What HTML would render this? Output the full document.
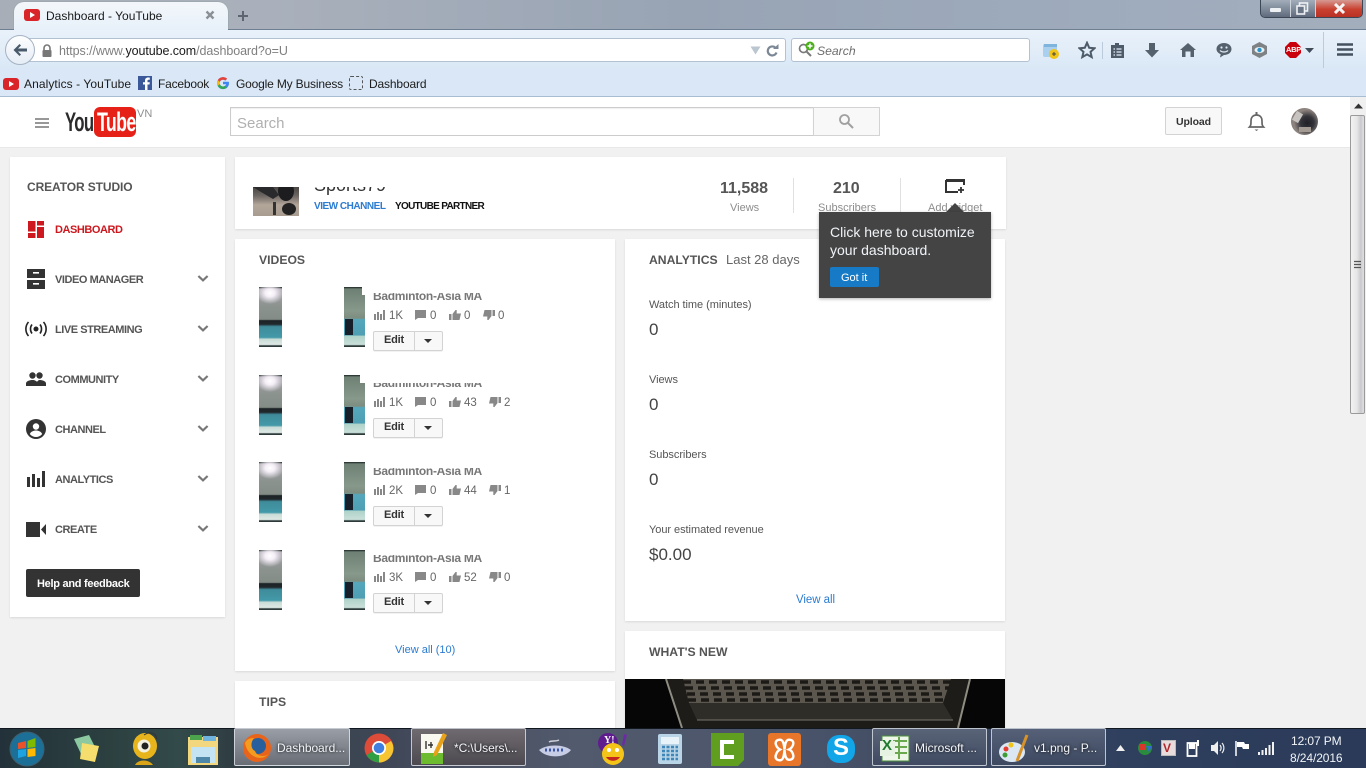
<!DOCTYPE html>
<html><head><meta charset="utf-8"><title>Dashboard - YouTube</title>
<style>
html,body{margin:0;padding:0;width:1366px;height:768px;overflow:hidden;background:#f1f1f1;font-family:"Liberation Sans",sans-serif;color:#333}
div,span,svg{position:absolute}
.t{white-space:nowrap;line-height:1}
.card{background:#fff;box-shadow:0 1px 2px rgba(0,0,0,.1)}
.nav{left:55px;font-size:11px;font-weight:bold;color:#555;letter-spacing:-.45px}
.chev{left:197px;width:12px;height:8px}
.st{font-size:11.5px;color:#666}
.lab{left:649px;font-size:11px;color:#555;letter-spacing:-.05px}
.val{left:649px;font-size:17px;color:#444}
.bm{font-size:12px;color:#1c1c1c;letter-spacing:-.08px}
.tb{font-size:12px;color:#f2f5f8;text-shadow:0 0 3px #000}
.hd{font-size:12.2px;font-weight:bold;color:#555}
.btn{top:728px;height:38px;border:1px solid rgba(230,235,240,.75);border-radius:2px;box-sizing:border-box}
.thumb{width:23px;height:60px;background:radial-gradient(ellipse 14px 11px at 11px 6px,#fff 0,#f4eef6 35%,rgba(200,190,205,0) 100%),linear-gradient(180deg,#2f3a38 0,#2f3a38 1.5%,#a9a3ae 3%,#8d9490 30%,#838c86 54%,#1c2326 56%,#20282b 62%,#3f8c9b 66%,#4399a8 84%,#c8dcd6 87%,#dfe9e5 96%,#2d3a3a 98%)}
.thumb2{width:21px;height:60px;background:linear-gradient(#17202a,#17202a) 1px 32px/8px 16px no-repeat,linear-gradient(180deg,#2f3a38 0,#2f3a38 1.5%,#6d8073 3%,#87998b 40%,#7d8d80 52%,#55a7bb 54%,#4e9fb4 80%,#b0d3ca 82%,#c9e0d9 96%,#2d3a3a 98%)}
.edit{left:373px;width:70px;height:20px;box-sizing:border-box;border:1px solid #d3d3d3;border-radius:2px;background:#f8f8f8;box-shadow:0 1px 0 rgba(0,0,0,.05)}
.edit i{position:absolute;left:40px;top:0;width:1px;height:18px;background:#d3d3d3}
.edit b{position:absolute;left:0;top:0;width:40px;text-align:center;font:bold 11px/16px "Liberation Sans",sans-serif;color:#333;letter-spacing:-.2px}
.edit u{position:absolute;left:50px;top:7px;border:4px solid transparent;border-top:4px solid #333;border-bottom:0}
.title{left:373px;width:180px;height:10px;overflow:hidden}
.title span{left:0;top:-4px;font-size:12px;font-weight:bold;color:#777;white-space:nowrap;line-height:14px;letter-spacing:-.3px}
</style></head><body>
<svg width="0" height="0" style="left:0;top:0"><defs>
<symbol id="bars" viewBox="0 0 12 10"><path d="M0 4h2v6H0zM3 2h2v8H3zM6 4h2v6H6zM9 0h2v10H9z"/></symbol>
<symbol id="cmt" viewBox="0 0 11 10"><path d="M0 0h11v8H3L0 10z"/></symbol>
<symbol id="up" viewBox="0 0 12 10"><path d="M0 4h2.500v6H0zM3.500 4 6.500 0h1.200v3.500H12L10.500 10H3.500z"/></symbol>
<symbol id="dn" viewBox="0 0 12 10"><path d="M9.500 0H12v6H9.500zM8.500 6l-3 4H4.300V6.500H0L1.500 0h7z"/></symbol>
<symbol id="chev" viewBox="0 0 12 8"><path d="M1.400 1 6 5.400 10.600 1" fill="none" stroke="#777" stroke-width="2.200"/></symbol>
<symbol id="yt" viewBox="0 0 16 12"><rect width="16" height="12" rx="3" fill="#d9252a"/><path d="M6 3l5 3-5 3z" fill="#fff"/></symbol>
</defs></svg>

<!-- title bar -->
<div style="left:0;top:0;width:1366px;height:30px;background:linear-gradient(90deg,#a8aeb8 0,#a9b0bb 20%,#98a4b4 50%,#9eabbd 80%,#a3aebc 100%)"></div>
<div style="left:0;top:29px;width:1366px;height:1px;background:#6e7f92"></div>
<div style="left:14px;top:2px;width:214px;height:28px;background:linear-gradient(180deg,#f3f7fb,#e7f0f9);border-radius:10px 10px 0 0;box-shadow:0 0 1px #687"></div>
<svg style="left:24px;top:9px" width="16" height="12"><use href="#yt"/></svg>
<div class="t" style="left:46px;top:10px;font-size:12px;color:#1a1a1a">Dashboard - YouTube</div>
<svg style="left:205px;top:10px" width="10" height="10"><path d="M1.500 1.500 8.500 8.500M8.500 1.500 1.500 8.500" stroke="#8b8f96" stroke-width="2.400"/></svg>
<svg style="left:237px;top:10px" width="12" height="12"><path d="M6 1v10M1 6h10" stroke="#5c6570" stroke-width="2"/></svg>
<!-- window buttons -->
<div style="left:1260px;top:0;width:103px;height:18px;border:1px solid #3c4654;border-top:0;border-radius:0 0 5px 5px;box-sizing:border-box;overflow:hidden;background:#73808f">
 <div style="left:0;top:0;width:29px;height:17px;background:linear-gradient(180deg,#a3adba,#5f6b7d)"></div>
 <div style="left:29px;top:0;width:26px;height:17px;background:linear-gradient(180deg,#a3adba,#5f6b7d);border-left:1px solid #cdd3da;border-right:1px solid #cdd3da;box-sizing:border-box"></div>
 <div style="left:55px;top:0;width:47px;height:17px;background:linear-gradient(180deg,#d69a92 0,#c9402f 55%,#b83224 100%)"></div>
 <div style="left:9px;top:8px;width:11px;height:4px;background:#eef1f4;border-radius:1px"></div>
 <svg style="left:35px;top:2px" width="13" height="13"><rect x="3.500" y="1" width="8" height="8" fill="none" stroke="#eef1f4" stroke-width="1.600"/><rect x="1" y="4" width="7.500" height="8" fill="#6a7585" stroke="#eef1f4" stroke-width="1.600"/></svg>
 <svg style="left:72px;top:3px" width="13" height="11"><path d="M2 1 11 10M11 1 2 10" stroke="#f4f4f4" stroke-width="3"/></svg>
</div>

<!-- nav bar -->
<div style="left:0;top:30px;width:1366px;height:66px;background:linear-gradient(180deg,#e9f1fa 0,#e2edf8 30%,#d9e7f6 60%,#d9e7f6 100%)"></div>
<div style="left:0;top:96px;width:1366px;height:1px;background:#a9bdd2"></div>
<div style="left:20px;top:38px;width:766px;height:24px;background:#fff;border:1px solid #b3c2d3;border-left:0;border-radius:0 3px 3px 0;box-sizing:border-box"></div>
<div style="left:5px;top:35px;width:30px;height:30px;border-radius:50%;background:linear-gradient(180deg,#fdfeff,#e6edf5);border:1px solid #a4b2c2;box-sizing:border-box"></div>
<svg style="left:12px;top:43px" width="16" height="14"><path d="M7.500 1 1.500 7l6 6 1.500-1.500L6 8.500h9v-3H6l3-3z" fill="#4a5a6b"/></svg>
<svg style="left:41px;top:44px" width="12" height="13"><path d="M3 6V4a3 3 0 0 1 6 0v2" fill="none" stroke="#777" stroke-width="1.600"/><rect x="1.500" y="6" width="9" height="7" rx="1" fill="#777"/></svg>
<div class="t" style="left:59px;top:45px;font-size:12.500px;color:#7f7f7f;letter-spacing:-.08px">https://www.<span style="position:static;color:#1a1a1a">youtube.com</span>/dashboard?o=U</div>
<svg style="left:750px;top:46px" width="11" height="9"><path d="M.5 .5h10L5.500 8.500z" fill="#bcc6d0"/></svg>
<svg style="left:766px;top:44px" width="13" height="13"><path d="M10.500 8.500a4.500 4.500 0 1 1-1-4.700" fill="none" stroke="#7b8794" stroke-width="2.200"/><path d="M7 5h5.500V0z" fill="#7b8794"/></svg>
<div style="left:791px;top:38px;width:239px;height:24px;background:#fff;border:1px solid #b3c2d3;border-radius:3px;box-sizing:border-box"></div>
<svg style="left:797px;top:41px" width="20" height="18"><circle cx="6.500" cy="7.500" r="4" fill="none" stroke="#7a7a7a" stroke-width="1.700"/><path d="M9.500 10.500 14 15" stroke="#7a7a7a" stroke-width="2"/><circle cx="13" cy="5" r="4.500" fill="#4caf1c"/><path d="M13 2.500v5M10.500 5h5" stroke="#fff" stroke-width="1.500"/></svg>
<div class="t" style="left:817px;top:45px;font-size:12.200px;font-style:italic;color:#6d6d6d">Search</div>
<!-- toolbar icons -->
<svg style="left:1042px;top:42px" width="18" height="18"><rect x="1" y="2" width="14" height="13" rx="2" fill="#a9d0ee"/><rect x="2" y="2" width="13" height="3" fill="#7fb4dc"/><circle cx="12" cy="12" r="5" fill="#f0c419"/><path d="M10 12h4M12 10v4" stroke="#444" stroke-width="1"/></svg>
<svg style="left:1078px;top:41px" width="18" height="18"><path d="M9 1.800 11.200 6.800 16.500 7.300 12.500 10.900 13.700 16.100 9 13.400 4.300 16.100 5.500 10.900 1.500 7.300 6.800 6.800z" fill="none" stroke="#4e5b69" stroke-width="2"/></svg>
<div style="left:1102px;top:42px;width:1px;height:17px;background:#bccbdb"></div>
<svg style="left:1110px;top:42px" width="15" height="16"><path d="M1 3h4V1h4v2h5v13H1z" fill="#4e5b69"/><path d="M3.500 7h1.500M3.500 10h1.500M3.500 13h1.500M6.500 7h5M6.500 10h5M6.500 13h5" stroke="#e3edf8" stroke-width="1.300"/></svg>
<svg style="left:1144px;top:42px" width="16" height="16"><path d="M5 1h6v7h4l-7 7.500L1 8h4z" fill="#56616e"/></svg>
<svg style="left:1180px;top:43px" width="16" height="14"><path d="M8 0 16 7h-2v7h-3.500V8.500h-5V14H2V7H0z" fill="#56616e"/></svg>
<svg style="left:1216px;top:42px" width="16" height="16"><path d="M8 1c4.300 0 7.500 2.500 7.500 6S12.300 13 8 13l-4 2.500.7-3.200C2 11 .5 9.300.5 7 .5 3.500 3.700 1 8 1z" fill="#56616e"/><circle cx="5.500" cy="5.500" r="1.100" fill="#dfe9f5"/><circle cx="10.500" cy="5.500" r="1.100" fill="#dfe9f5"/><path d="M4 8.500c2 2 6 2 8 0" fill="none" stroke="#dfe9f5" stroke-width="1.200"/></svg>
<svg style="left:1252px;top:42px" width="15" height="16"><path d="M7.500 0 15 4v8l-7.500 4L0 12V4z" fill="#7e8285"/><ellipse cx="7.500" cy="8" rx="5" ry="3" fill="#e9f0f6"/><circle cx="7.500" cy="8" r="2.200" fill="#2b93c8"/></svg>
<svg style="left:1285px;top:42px" width="16" height="16"><path d="M5 0h6l5 5v6l-5 5H5l-5-5V5z" fill="#c9000b"/></svg>
<div class="t" style="left:1286px;top:46px;font-size:7.500px;font-weight:bold;color:#fff;letter-spacing:-.3px">ABP</div>
<svg style="left:1305px;top:48px" width="9" height="5"><path d="M0 0h9L4.500 5z" fill="#3e4a58"/></svg>
<div style="left:1323px;top:32px;width:1px;height:36px;background:#bccbdb"></div>
<svg style="left:1337px;top:43px" width="16" height="13"><path d="M0 1.500h16M0 6.500h16M0 11.500h16" stroke="#45515f" stroke-width="2.400"/></svg>

<!-- bookmarks -->
<svg style="left:3px;top:78px" width="16" height="12"><use href="#yt"/></svg>
<div class="t bm" style="left:24px;top:78px;letter-spacing:.08px">Analytics - YouTube</div>
<div style="left:138px;top:76px;width:14px;height:14px;background:#3b5998"></div>
<svg style="left:138px;top:76px" width="14" height="14"><path d="M9.500 14V8.500h2l.3-2.300H9.500V4.800c0-.7.200-1.100 1.100-1.100h1.200V1.600c-.2 0-.9-.1-1.800-.1C8.300 1.500 7 2.600 7 4.500v1.700H5v2.300h2V14z" fill="#fff"/></svg>
<div class="t bm" style="left:158px;top:78px;letter-spacing:-.2px">Facebook</div>
<svg style="left:216px;top:76px" width="14" height="14" viewBox="0 0 14 14"><path d="M12.500 5.800H7v2.500h3.200A3.400 3.400 0 1 1 9.300 4.600l1.800-1.800A6 6 0 1 0 13 7c0-.4 0-.8-.5-1.200z" fill="#4285f4"/><path d="M1.700 4.200 3.800 5.700A3.400 3.400 0 0 1 9.300 4.600l1.800-1.800A6 6 0 0 0 1.700 4.200z" fill="#ea4335"/><path d="M1.700 4.200a6 6 0 0 0 0 5.600l2.100-1.600a3.400 3.400 0 0 1 0-2.500z" fill="#fbbc05"/><path d="M1.700 9.800A6 6 0 0 0 11 11.500L9 9.900a3.400 3.400 0 0 1-5.200-1.700z" fill="#34a853"/></svg>
<div class="t bm" style="left:236px;top:78px;letter-spacing:-.17px">Google My Business</div>
<div style="left:349px;top:76px;width:14px;height:14px;border:1px dashed #555;box-sizing:border-box;border-radius:2px"></div>
<div class="t bm" style="left:369px;top:78px;letter-spacing:-.15px">Dashboard</div>

<!-- masthead -->
<div style="left:0;top:97px;width:1350px;height:50px;background:#fff;border-bottom:1px solid #e8e8e8"></div>
<svg style="left:35px;top:118px" width="14" height="10"><path d="M0 1h14M0 5h14M0 9h14" stroke="#8a8a8a" stroke-width="1.700"/></svg>
<div class="t" style="left:65px;top:109px;font-size:27px;font-weight:bold;color:#2b2b2b;letter-spacing:-1px;transform:scaleX(.62);transform-origin:0 0">You</div>
<div style="left:94px;top:107px;width:42px;height:30px;background:#e62117;border-radius:6px"></div>
<div class="t" style="left:97px;top:109px;font-size:27px;font-weight:bold;color:#fff;letter-spacing:-1px;transform:scaleX(.66);transform-origin:0 0">Tube</div>
<div class="t" style="left:137px;top:109px;font-size:11px;color:#8f8f8f">VN</div>
<div style="left:230px;top:107px;width:584px;height:29px;border:1px solid #ccc;box-sizing:border-box;background:#fff;box-shadow:inset 0 1px 1px #eee"></div>
<div class="t" style="left:237px;top:116px;font-size:15px;color:#b0b0b0">Search</div>
<div style="left:813px;top:107px;width:67px;height:29px;border:1px solid #d3d3d3;box-sizing:border-box;background:#f8f8f8"></div>
<svg style="left:838px;top:113px" width="17" height="17"><circle cx="6.500" cy="6.500" r="4.500" fill="none" stroke="#a0a0a0" stroke-width="1.800"/><path d="M10 10 15 15" stroke="#a0a0a0" stroke-width="2"/></svg>
<div style="left:1165px;top:107px;width:57px;height:28px;border:1px solid #d3d3d3;box-sizing:border-box;border-radius:2px;background:#f8f8f8"></div>
<div class="t" style="left:1176px;top:117px;font-size:10.500px;font-weight:bold;color:#333;letter-spacing:-.1px">Upload</div>
<svg style="left:1247px;top:110px" width="19" height="22"><path d="M2.500 17c1.500-1.500 1.500-3 1.500-6 0-3.500 2-6 5.500-6s5.500 2.500 5.500 6c0 3 0 4.500 1.500 6z" fill="none" stroke="#666" stroke-width="1.700"/><path d="M8.500 2h2v3h-2zM7.500 19.500h4l-2 1.500z" fill="#666"/></svg>
<div style="left:1291px;top:108px;width:27px;height:27px;border-radius:50%;background:radial-gradient(circle at 60% 55%,#1f1f24 0,#33333a 30%,#8f8580 60%,#77706c 100%);overflow:hidden">
 <div style="left:3px;top:4px;width:7px;height:10px;background:#c7c3c0;transform:rotate(30deg)"></div>
 <div style="left:8px;top:19px;width:12px;height:5px;background:#a39a93"></div>
</div>

<!-- scrollbar -->
<div style="left:1350px;top:97px;width:16px;height:631px;background:#f0f0f0"></div>
<svg style="left:1354px;top:103px" width="9" height="6"><path d="M0 5.500 4.500 .5 9 5.500z" fill="#333"/></svg>
<div style="left:1350px;top:115px;width:15px;height:299px;box-sizing:border-box;border:1px solid #9a9a9a;border-radius:2px;background:linear-gradient(90deg,#f2f2f2 0,#e6e6e6 45%,#cacace 75%,#e0e0e2 100%)"></div>
<svg style="left:1353px;top:260px" width="9" height="10"><path d="M1 1.500h7M1 4.500h7M1 7.500h7" stroke="#555" stroke-width="1.300"/></svg>

<!-- sidebar -->
<div class="card" style="left:10px;top:157px;width:215px;height:460px"></div>
<div class="t" style="left:27px;top:181px;font-size:12px;font-weight:bold;color:#555;letter-spacing:-.1px">CREATOR STUDIO</div>
<svg style="left:28px;top:221px" width="16" height="17"><path d="M0 0h7.500v10.500H0zM9 0h7v4.500H9zM9 6h7v11H9zM0 12h7.500v5H0z" fill="#cc181e"/></svg>
<div class="t nav" style="top:225px;color:#cc181e">DASHBOARD</div>
<svg style="left:27px;top:269px" width="18" height="20"><path d="M0 0h18v9H0zM0 11h18v9H0z" fill="#333"/><path d="M6 3h6v1.600H6zM6 14h6v1.600H6z" fill="#fff"/></svg>
<div class="t nav" style="top:275px">VIDEO MANAGER</div>
<svg class="chev" style="top:275px"><use href="#chev"/></svg>
<svg style="left:25px;top:321px" width="22" height="16"><circle cx="11" cy="8" r="2.500" fill="#222"/><path d="M7 3.500c-2 2.500-2 6.500 0 9M15 3.500c2 2.500 2 6.500 0 9M3.500 1c-3.500 4-3.500 10 0 14M18.500 1c3.500 4 3.500 10 0 14" fill="none" stroke="#222" stroke-width="1.600"/></svg>
<div class="t nav" style="top:325px">LIVE STREAMING</div>
<svg class="chev" style="top:325px"><use href="#chev"/></svg>
<svg style="left:26px;top:372px" width="20" height="14"><circle cx="6.500" cy="3.500" r="3.200" fill="#333"/><circle cx="13.500" cy="3.500" r="3.200" fill="#333"/><path d="M0 14v-2.500C0 9 4 8 6.500 8S10 9 11 9.800c1-.9 1.500-1.800 2.500-1.800 2.500 0 6.500 1 6.500 3.500V14z" fill="#333"/></svg>
<div class="t nav" style="top:375px">COMMUNITY</div>
<svg class="chev" style="top:375px"><use href="#chev"/></svg>
<svg style="left:26px;top:419px" width="20" height="20"><circle cx="10" cy="10" r="10" fill="#333"/><circle cx="10" cy="7.500" r="3.200" fill="#fff"/><path d="M3.800 15c1.200-2.500 3.700-3.500 6.200-3.500s5 1 6.200 3.500C14.500 17 12.300 18 10 18s-4.500-1-6.200-3z" fill="#fff"/></svg>
<div class="t nav" style="top:425px">CHANNEL</div>
<svg class="chev" style="top:425px"><use href="#chev"/></svg>
<svg style="left:27px;top:471px" width="18" height="16"><path d="M0 6h3v10H0zM5 3h3v13H5zM10 7h3v9h-3zM15 0h3v16h-3z" fill="#333"/></svg>
<div class="t nav" style="top:475px">ANALYTICS</div>
<svg class="chev" style="top:475px"><use href="#chev"/></svg>
<svg style="left:26px;top:522px" width="20" height="15"><path d="M0 0h14v15H0zM15 7.500 20 2v11z" fill="#333"/></svg>
<div class="t nav" style="top:525px">CREATE</div>
<svg class="chev" style="top:525px"><use href="#chev"/></svg>
<div style="left:26px;top:569px;width:114px;height:28px;background:#333;border-radius:2px"></div>
<div class="t" style="left:37px;top:579px;font-size:11px;font-weight:bold;color:#fff;letter-spacing:-.28px">Help and feedback</div>

<!-- top card -->
<div class="card" style="left:235px;top:157px;width:771px;height:72px"></div>
<div style="left:253px;top:187px;width:46px;height:29px;background:linear-gradient(180deg,#4a4644 0,#6d6662 30%,#b3a79a 62%,#a89c90 100%)"></div>
<svg style="left:253px;top:187px" width="46" height="29"><ellipse cx="33" cy="4" rx="8" ry="10" fill="#1d1c1e"/><ellipse cx="36" cy="22" rx="7" ry="6" fill="#222"/><path d="M0 0H20L26 8 20 12 8 5z" fill="#2a2a2c"/><rect x="20" y="15" width="3" height="13" fill="#333"/></svg>
<div style="left:314px;top:187px;width:90px;height:9px;overflow:hidden"><span class="t" style="left:0;top:-11px;font-size:18px;color:#333">Sports79</span></div>
<div class="t" style="left:314px;top:202px;font-size:10px;font-weight:bold;color:#2b7bd0;letter-spacing:-.48px">VIEW CHANNEL</div>
<div class="t" style="left:395px;top:202px;font-size:10px;font-weight:bold;color:#111;letter-spacing:-.68px">YOUTUBE PARTNER</div>
<div class="t" style="left:720px;top:181px;font-size:16px;font-weight:bold;color:#555">11,588</div>
<div class="t" style="left:730px;top:203px;font-size:11px;color:#8d8d8d">Views</div>
<div style="left:793px;top:178px;width:1px;height:35px;background:#e0e0e0"></div>
<div class="t" style="left:833px;top:181px;font-size:16px;font-weight:bold;color:#555">210</div>
<div class="t" style="left:818px;top:203px;font-size:11px;color:#8d8d8d">Subscribers</div>
<div style="left:900px;top:178px;width:1px;height:35px;background:#e0e0e0"></div>
<svg style="left:945px;top:179px" width="20" height="15"><path d="M1 1h18v5M13 13H1V1" fill="none" stroke="#333" stroke-width="2"/><path d="M16 8v6M13 11h6" stroke="#333" stroke-width="1.800"/><path d="M1 1h18v2H1z" fill="#333"/></svg>
<div class="t" style="left:928px;top:203px;font-size:11px;color:#8d8d8d">Add widget</div>

<!-- videos -->
<div class="card" style="left:235px;top:239px;width:380px;height:432px"></div>
<div class="t hd" style="left:259px;top:254px">VIDEOS</div>

<div class="thumb" style="left:259px;top:287px"></div><div class="thumb2" style="left:344px;top:287px"></div>
<div style="left:362px;top:287px;width:3px;height:8px;background:#fff"></div>
<div class="title" style="top:293px"><span>Badminton-Asia MA</span></div>
<svg style="left:374px;top:310px" width="12" height="10" fill="#888"><use href="#bars"/></svg><div class="t st" style="left:389px;top:311px">1K</div>
<svg style="left:415px;top:310px" width="11" height="10" fill="#888"><use href="#cmt"/></svg><div class="t st" style="left:430px;top:311px">0</div>
<svg style="left:449px;top:310px" width="12" height="10" fill="#888"><use href="#up"/></svg><div class="t st" style="left:464px;top:311px">0</div>
<svg style="left:483px;top:310px" width="12" height="10" fill="#888"><use href="#dn"/></svg><div class="t st" style="left:498px;top:311px">0</div>
<div class="edit" style="top:331px"><b>Edit</b><i></i><u></u></div>

<div class="thumb" style="left:259px;top:375px"></div><div class="thumb2" style="left:344px;top:375px"></div>
<div style="left:360px;top:375px;width:5px;height:8px;background:#fff"></div>
<div class="title" style="top:383px;height:5px"><span style="top:-7px">Badminton-Asia MA</span></div>
<svg style="left:374px;top:397px" width="12" height="10" fill="#888"><use href="#bars"/></svg><div class="t st" style="left:389px;top:398px">1K</div>
<svg style="left:415px;top:397px" width="11" height="10" fill="#888"><use href="#cmt"/></svg><div class="t st" style="left:430px;top:398px">0</div>
<svg style="left:449px;top:397px" width="12" height="10" fill="#888"><use href="#up"/></svg><div class="t st" style="left:464px;top:398px">43</div>
<svg style="left:489px;top:397px" width="12" height="10" fill="#888"><use href="#dn"/></svg><div class="t st" style="left:504px;top:398px">2</div>
<div class="edit" style="top:418px"><b>Edit</b><i></i><u></u></div>

<div class="thumb" style="left:259px;top:462px"></div><div class="thumb2" style="left:344px;top:462px"></div>
<div class="title" style="top:468px"><span>Badminton-Asia MA</span></div>
<svg style="left:374px;top:485px" width="12" height="10" fill="#888"><use href="#bars"/></svg><div class="t st" style="left:389px;top:486px">2K</div>
<svg style="left:415px;top:485px" width="11" height="10" fill="#888"><use href="#cmt"/></svg><div class="t st" style="left:430px;top:486px">0</div>
<svg style="left:449px;top:485px" width="12" height="10" fill="#888"><use href="#up"/></svg><div class="t st" style="left:464px;top:486px">44</div>
<svg style="left:489px;top:485px" width="12" height="10" fill="#888"><use href="#dn"/></svg><div class="t st" style="left:504px;top:486px">1</div>
<div class="edit" style="top:506px"><b>Edit</b><i></i><u></u></div>

<div class="thumb" style="left:259px;top:550px"></div><div class="thumb2" style="left:344px;top:550px"></div>
<div class="title" style="top:555px"><span>Badminton-Asia MA</span></div>
<svg style="left:374px;top:572px" width="12" height="10" fill="#888"><use href="#bars"/></svg><div class="t st" style="left:389px;top:573px">3K</div>
<svg style="left:415px;top:572px" width="11" height="10" fill="#888"><use href="#cmt"/></svg><div class="t st" style="left:430px;top:573px">0</div>
<svg style="left:449px;top:572px" width="12" height="10" fill="#888"><use href="#up"/></svg><div class="t st" style="left:464px;top:573px">52</div>
<svg style="left:489px;top:572px" width="12" height="10" fill="#888"><use href="#dn"/></svg><div class="t st" style="left:504px;top:573px">0</div>
<div class="edit" style="top:593px"><b>Edit</b><i></i><u></u></div>

<div class="t" style="left:395px;top:645px;font-size:11px;color:#2b7bd0">View all (10)</div>
<div class="card" style="left:235px;top:681px;width:380px;height:47px"></div>
<div class="t hd" style="left:259px;top:696px">TIPS</div>

<!-- analytics -->
<div class="card" style="left:625px;top:239px;width:380px;height:382px"></div>
<div class="t hd" style="left:649px;top:254px">ANALYTICS</div>
<div class="t" style="left:726px;top:253px;font-size:13px;color:#666">Last 28 days</div>
<div class="t lab" style="top:300px">Watch time (minutes)</div><div class="t val" style="top:321px">0</div>
<div class="t lab" style="top:375px">Views</div><div class="t val" style="top:396px">0</div>
<div class="t lab" style="top:450px">Subscribers</div><div class="t val" style="top:471px">0</div>
<div class="t lab" style="top:525px">Your estimated revenue</div><div class="t val" style="top:546px">$0.00</div>
<div class="t" style="left:796px;top:595px;font-size:11.500px;color:#2b7bd0;letter-spacing:-.05px">View all</div>

<!-- what's new -->
<div class="card" style="left:625px;top:631px;width:380px;height:97px"></div>
<div class="t hd" style="left:649px;top:646px">WHAT'S NEW</div>
<div style="left:625px;top:679px;width:380px;height:49px;background:#060606;overflow:hidden">
<svg style="left:0;top:0" width="380" height="49"><path d="M41 0H345L333 49H57z" fill="#1d1c19"/><path d="M58 0H326L318 24H64z" fill="#5c574e"/><path d="M58 3H326M60 9H324M62 15H322M63 21H320" stroke="#1c1a17" stroke-width="3.500" stroke-dasharray="8 5"/><path d="M64 24H318L328 41H72z" fill="#2f2d28"/><path d="M72 41 200 41 328 41" stroke="#77736a" stroke-width="1"/><path d="M41 0 57 49M345 0 333 49" stroke="#8f8c82" stroke-width="2" fill="none"/></svg>
</div>

<!-- tooltip -->
<svg style="left:945px;top:203px" width="20" height="10"><path d="M0 10 10 0 20 10z" fill="#444"/></svg>
<div style="left:819px;top:212px;width:172px;height:86px;background:#444;box-shadow:0 1px 3px rgba(0,0,0,.3)"></div>
<div class="t" style="left:830px;top:223px;font-size:14px;color:#f0f4f8;line-height:18px;white-space:normal;width:155px">Click here to customize your dashboard.</div>
<div style="left:830px;top:267px;width:49px;height:20px;background:#167ac6;border-radius:2px"></div>
<div class="t" style="left:841px;top:273px;font-size:11px;color:#fff">Got it</div>

<!-- taskbar -->
<div style="left:0;top:728px;width:1366px;height:40px;background:linear-gradient(90deg,#23323a 0,#2c4040 8%,#334a4a 13%,#2f3d42 17%,#42495a 30%,#525a6d 42%,#4c566b 55%,#3f4a63 70%,#2f405e 82%,#2a3a58 100%)"></div>
<div style="left:0;top:728px;width:1366px;height:1px;background:#111820"></div>
<svg style="left:8px;top:731px" width="38" height="37"><circle cx="19" cy="18" r="17" fill="#1c6f96" stroke="#3d5f70"/><path d="M10 12l8-2v7l-8 1z" fill="#e8532b"/><path d="M19.500 10l8-3v9l-8 1z" fill="#7fba00"/><path d="M10 19l8-1v7l-8 2z" fill="#1ea3e0"/><path d="M19.500 18l8-1v8l-8 1z" fill="#ffb900"/></svg>
<svg style="left:70px;top:734px" width="34" height="30"><path d="M4 5l15-4 8 16-15 5z" fill="#8cc9a0"/><path d="M12 9l17 3-4 16-15-3z" fill="#f5de6d"/></svg>
<svg style="left:130px;top:732px" width="32" height="34"><ellipse cx="15" cy="14" rx="12" ry="13" fill="#e8b41c"/><circle cx="14" cy="14" r="6.500" fill="#f4f1df"/><circle cx="15" cy="14" r="3.500" fill="#222"/><path d="M5 33c3-6 14-6 18 0z" fill="#d9a417"/><path d="M14 3c6-4 12-2 13 4" fill="none" stroke="#333"/></svg>
<svg style="left:187px;top:733px" width="32" height="33"><path d="M1 4h30v28H1z" fill="#f3d77e"/><path d="M3 2h12v5H3z" fill="#4ba34b"/><path d="M16 3h13v5H16z" fill="#6fb4df"/><path d="M4 14h24v16H4z" fill="#c4e3f3"/><path d="M9 24h14v6H9z" fill="#4f87a9"/></svg>
<div class="btn" style="left:234px;width:116px;background:linear-gradient(180deg,#9a9ea6,#686d76)"></div>
<svg style="left:242px;top:733px" width="30" height="30"><circle cx="15" cy="15" r="14" fill="#e8641b"/><circle cx="16" cy="13" r="8" fill="#2a5f9e"/><path d="M3 10c2 12 14 20 24 11-4 3-12 3-14-3C9 16 8 10 12 5 7 5 4 7 3 10z" fill="#f39c1f"/></svg>
<div class="t tb" style="left:277px;top:742px;letter-spacing:-.05px">Dashboard...</div>
<svg style="left:364px;top:733px" width="30" height="30"><circle cx="15" cy="15" r="14.500" fill="#dd4b39"/><path d="M15 15 2.500 22A14.500 14.500 0 0 0 15 29.500z" fill="#2f9e44"/><path d="M15 15 15 29.500A14.500 14.500 0 0 0 29.500 15 14.500 14.500 0 0 0 27 8z" fill="#f7c531"/><circle cx="15" cy="15" r="7" fill="#fff"/><circle cx="15" cy="15" r="5.300" fill="#3f7fe0"/></svg>
<div class="btn" style="left:411px;width:115px;background:linear-gradient(180deg,#6f6a70,#4c4a50)"></div>
<svg style="left:419px;top:731px" width="30" height="34"><path d="M2 3h22v30H2z" fill="#f8f8f0"/><path d="M2 22h22v11H2z" fill="#6dbb2f"/><path d="M24 2 28 4 18 24 14 26 15 21z" fill="#e7a21a"/><path d="M7 10v8M9 14h5M12 11v6" stroke="#333" stroke-width="1.400" fill="none"/></svg>
<div class="t tb" style="left:454px;top:742px;letter-spacing:-.1px">*C:\Users\...</div>
<svg style="left:537px;top:736px" width="36" height="24"><path d="M2 14c8-6 24-6 32 0-6 8-24 9-32 0z" fill="#c8cde6"/><path d="M8 14h20" stroke="#3c56a8" stroke-width="3" stroke-dasharray="2 2"/><path d="M12 6c3-2 6 0 10-2" fill="none" stroke="#cfd2d8" stroke-width="1.400"/></svg>
<svg style="left:597px;top:733px" width="32" height="33"><circle cx="11" cy="10" r="10" fill="#5f1c8f"/><circle cx="16" cy="21" r="11" fill="#f5c419"/><path d="M9 24c3 5 11 5 14 0z" fill="#c2281f"/><path d="M27 1l3 1-3 11-2-1z" fill="#6d2aa5"/><circle cx="12" cy="17" r="2" fill="#fff"/><circle cx="20" cy="17" r="2" fill="#fff"/></svg>
<div class="t" style="left:604px;top:736px;font-size:10px;font-weight:bold;color:#fff;font-family:'Liberation Serif',serif">Y!</div>
<svg style="left:658px;top:734px" width="24" height="30"><rect width="24" height="30" rx="2" fill="#b8d4e6"/><rect x="3" y="3" width="18" height="7" fill="#e8f3f9"/><path d="M4 13h16M4 17h16M4 21h16M4 25h16" stroke="#3f86b8" stroke-width="2.400" stroke-dasharray="3 1.500"/></svg>
<svg style="left:711px;top:733px" width="33" height="33"><path d="M0 0h33v27l-6 6H0z" fill="#5f9e1e"/><path d="M23 9H11v15h12" fill="none" stroke="#fff" stroke-width="4"/></svg>
<svg style="left:768px;top:733px" width="33" height="33"><rect width="33" height="33" rx="3" fill="#e8762a"/><path d="M10 7c6-2 6 6 6.500 9.500C17 13 17 5 23 7c5 2 1 8-2 9.500 3 1 7 8 2 10-6 2-6-6-6.500-9.500C16 21 16 29 10 27c-5-2-1-9 2-10.500C9 15 5 9 10 7z" fill="none" stroke="#fff" stroke-width="2.400"/></svg>
<svg style="left:826px;top:733px" width="30" height="32"><rect x="1" y="2" width="28" height="28" rx="12" fill="#12a5e8"/></svg>
<div class="t" style="left:833px;top:736px;font-size:24px;font-weight:bold;color:#fff">S</div>
<div class="btn" style="left:872px;width:115px;background:linear-gradient(180deg,#5a6478,#3f4a62)"></div>
<svg style="left:879px;top:733px" width="32" height="30"><path d="M3 3h27v25H3z" fill="#eef6ea" stroke="#4b8f3c"/><path d="M14 8h14M14 14h14M14 20h14M20 4v22" stroke="#6aa84f" stroke-width="2"/><path d="M1 8h15v15H1z" fill="#e6f2e2"/></svg>
<div class="t" style="left:882px;top:738px;font-size:15px;font-weight:bold;color:#1e7a2f">X</div>
<div class="t tb" style="left:915px;top:742px">Microsoft ...</div>
<div class="btn" style="left:991px;width:115px;background:linear-gradient(180deg,#566178,#3d4961)"></div>
<svg style="left:998px;top:733px" width="32" height="32"><ellipse cx="14" cy="19" rx="13" ry="10" fill="#dbe7f3"/><circle cx="8" cy="16" r="2.500" fill="#e53c2f"/><circle cx="13" cy="12" r="2.500" fill="#f0c419"/><circle cx="7" cy="22" r="2.500" fill="#3f9c35"/><path d="M29 2 19 28" stroke="#d8922a" stroke-width="3"/></svg>
<div class="t tb" style="left:1034px;top:742px">v1.png - P...</div>
<svg style="left:1116px;top:745px" width="9" height="6"><path d="M0 6 4.500 0 9 6z" fill="#f0f0f0"/></svg>
<svg style="left:1137px;top:740px" width="16" height="16"><circle cx="8" cy="8" r="7" fill="#2a8a3e"/><path d="M3 4h6v6H3z" fill="#d9372b"/><path d="M9 6h6l-3 6z" fill="#2f6fd0"/></svg>
<div style="left:1161px;top:740px;width:15px;height:16px;background:#e9dcdc;border:1px solid #bbb;box-sizing:border-box"></div>
<div class="t" style="left:1163px;top:742px;font-size:12px;font-weight:bold;color:#b3262b">V</div>
<svg style="left:1186px;top:739px" width="15" height="18"><rect x="1.500" y="4" width="9" height="13" fill="none" stroke="#fff" stroke-width="1.800"/><path d="M3 4h6v6H3zM11 1h2v6h-2z" fill="#fff"/></svg>
<svg style="left:1210px;top:740px" width="16" height="16"><path d="M1 5h3l4-4v14l-4-4H1z" fill="#eee"/><path d="M10 5c1.500 2 1.500 4 0 6M12 3c2.500 3 2.500 7 0 10" fill="none" stroke="#eee" stroke-width="1.200"/></svg>
<svg style="left:1235px;top:740px" width="15" height="16"><path d="M1 1v15" stroke="#fff" stroke-width="1.500"/><path d="M2 2h7l1 2h4v5H8L7 7H2z" fill="#fff"/></svg>
<svg style="left:1258px;top:741px" width="16" height="14"><path d="M0 11h2v3H0zM3.500 9h2v5h-2zM7 7h2v7H7zM10.500 4h2v10h-2zM14 1h2v13h-2z" fill="#f2f2f2"/></svg>
<div class="t" style="left:1291px;top:735px;font-size:12px;color:#f2f5f8;letter-spacing:-.1px">12:07 PM</div>
<div class="t" style="left:1290px;top:752px;font-size:12px;color:#f2f5f8;letter-spacing:-.1px">8/24/2016</div>
</body></html>
